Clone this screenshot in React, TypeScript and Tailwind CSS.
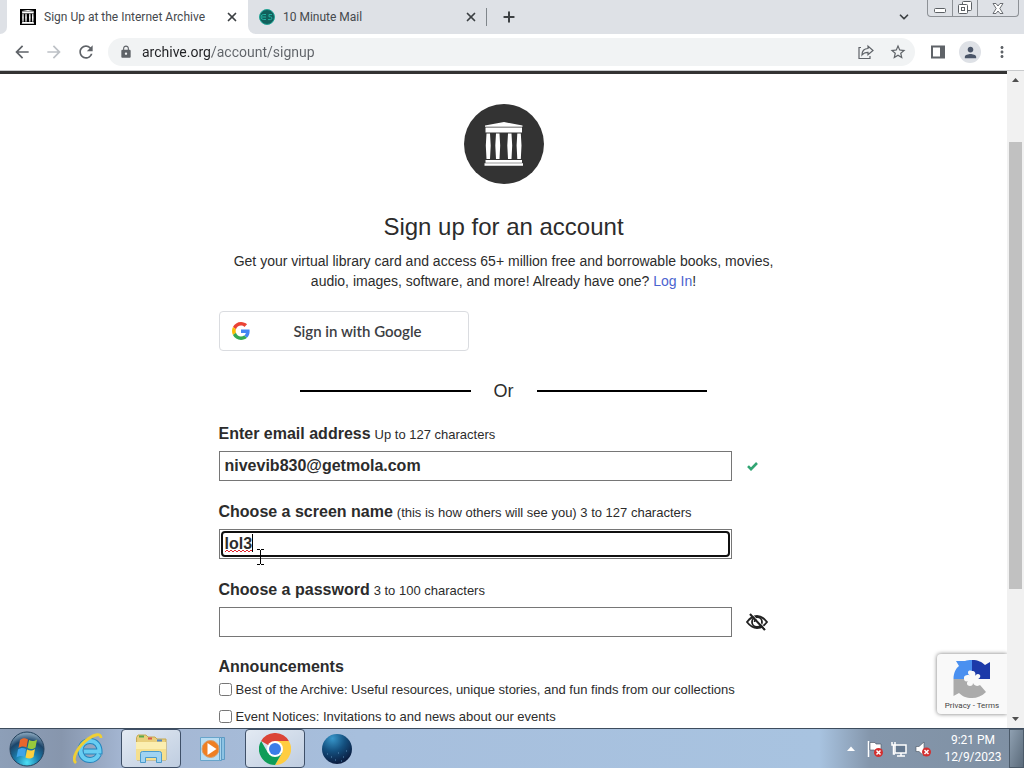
import React from "react";
import { ChevronDown, Plus, X } from "lucide-react";
import { MdArrowBack, MdArrowForward, MdLock, MdMoreVert, MdPerson, MdRefresh, MdStarBorder } from "react-icons/md";

const ArchiveLogo: React.FC<{ className?: string }> = ({ className }) => (
  <svg className={className} viewBox="0 0 40 44" fill="currentColor" aria-hidden="true">
    <path d="M20 0 38.500 3.500v1.200H1V3.500z" />
    <path d="M1.500 5.500h36.500v5H1.500z" />
    <path d="M2.500 11.500h3.500l.7 12-.7 13.500H2.500l-.7-13.500zM12 11.500h3.500l.7 12-.7 13.500H12l-.7-13.500zM24 11.500h3.500l.7 12-.7 13.500H24l-.7-13.500zM33.300 11.500h3.500l.7 12-.7 13.500h-3.500l-.7-13.500z" />
    <path d="M1.500 38h36.500v2.700H1.500zM.5 41.300h38.500v2.400H.5z" />
  </svg>
);

const GoogleIcon = () => (
  <svg className="size-[18px]" viewBox="0 0 48 48" aria-hidden="true">
    <path fill="#ea4335" d="M24 9.500c3.540 0 6.710 1.220 9.210 3.600l6.850-6.850C35.900 2.380 30.470 0 24 0 14.620 0 6.510 5.380 2.560 13.220l7.980 6.190C12.430 13.720 17.740 9.500 24 9.500z" />
    <path fill="#4285f4" d="M46.980 24.550c0-1.570-.15-3.090-.38-4.550H24v9.020h12.940c-.58 2.960-2.260 5.480-4.780 7.180l7.730 6c4.510-4.180 7.090-10.360 7.090-17.650z" />
    <path fill="#fbbc05" d="M10.530 28.590A14.500 14.500 0 0 1 9.770 24c0-1.600.27-3.140.76-4.590l-7.980-6.190A23.900 23.900 0 0 0 0 24c0 3.880.92 7.540 2.560 10.780z" />
    <path fill="#34a853" d="M24 48c6.480 0 11.930-2.130 15.890-5.810l-7.730-6c-2.150 1.450-4.920 2.300-8.160 2.300-6.260 0-11.570-4.220-13.470-9.910l-7.980 6.190C6.510 42.620 14.620 48 24 48z" />
  </svg>
);

const EyeSlash = () => (
  <svg className="h-[18px] w-[22px]" viewBox="0 0 22 18" fill="none" stroke="#222" aria-hidden="true">
    <path d="M1 9q4.500-6 10-6t10 6q-4.500 6-10 6T1 9z" strokeWidth="1.800" />
    <circle cx="11" cy="9" r="5" strokeWidth="1.800" />
    <path d="M8.500 9A2.500 2.500 0 0 1 11 6.500" strokeWidth="1.500" />
    <path d="m4 1 15 16" strokeWidth="2.200" />
    <path d="m5.500 .500 15 16" stroke="#fff" strokeWidth=".8" />
  </svg>
);

const TabStrip = () => (
  <header className="flex h-[34px] shrink-0 bg-white text-xs text-[#45494d]">
    <div className="w-[7px] rounded-br-lg bg-[#dee1e6]" />
    <div className="flex w-[241px] items-center bg-white pr-[9px] pl-[13px]">
      <span className="flex size-4 items-center justify-center bg-black text-white">
        <ArchiveLogo className="size-[14px]" />
      </span>
      <span className="ml-2 flex-1 whitespace-nowrap">Sign Up at the Internet Archive</span>
      <button aria-label="Close tab">
        <X className="size-[14px] text-[#3c4043]" strokeWidth={3} />
      </button>
    </div>
    <div className="flex flex-1 rounded-bl-lg bg-[#dee1e6]">
      <div className="flex w-[238px] items-center pr-2 pl-[11px]">
        <svg className="size-4" viewBox="0 0 16 16" aria-hidden="true">
          <circle cx="8" cy="8" r="7.500" fill="#12605c" stroke="#22a597" />
          <path d="M7 5.500H4.500A2.500 2.500 0 0 0 4.500 10.500H7M3 8h4M13 5.500h-3v2.300h1.500a1.400 1.400 0 0 1 0 2.800H9" fill="none" stroke="#23b3a2" />
        </svg>
        <span className="ml-2 flex-1">10 Minute Mail</span>
        <button aria-label="Close tab">
          <X className="size-[14px] text-[#3c4043]" strokeWidth={3} />
        </button>
      </div>
      <div className="my-2 w-px bg-[#80868b]" />
      <button aria-label="New tab" className="ml-[14px]">
        <Plus className="size-4 text-[#3c4043]" strokeWidth={3} />
      </button>
      <button aria-label="Search tabs" className="mr-4 ml-auto">
        <ChevronDown className="size-[14px] text-[#3c4043]" strokeWidth={3} />
      </button>
      <div className="mr-[5px] flex h-[17px] rounded-b border border-t-0 border-[#8d9196] text-[#5c6065]">
        <button aria-label="Minimize" className="flex w-6 items-center justify-center">
          <svg className="h-4 w-3" viewBox="0 0 12 16" fill="#fff" stroke="currentColor">
            <rect x=".5" y="8.500" width="11" height="4" rx="1" />
          </svg>
        </button>
        <button aria-label="Restore" className="flex w-[26px] items-center justify-center border-x border-[#8d9196]">
          <svg className="size-[14px]" viewBox="0 0 14 14" fill="#fff" stroke="currentColor">
            <rect x="4.500" y=".5" width="9" height="9" rx="1" />
            <rect x=".5" y="3.500" width="9" height="9" rx="1" />
            <rect x="3.500" y="6.500" width="3" height="3" />
          </svg>
        </button>
        <button aria-label="Close" className="flex w-10 items-center justify-center">
          <svg className="h-[11px] w-3" viewBox="0 0 12 11" fill="#fff" stroke="currentColor" strokeWidth=".9">
            <path d="M1 .500h3l2 2.500 2-2.500h3L7.800 5.500l3.200 5H8L6 8l-2 2.500H1l3.200-5z" />
          </svg>
        </button>
      </div>
    </div>
  </header>
);

const Toolbar = () => (
  <nav className="flex h-9 shrink-0 items-center bg-white pr-[13px] pl-3 text-[#5f6368]">
    <button aria-label="Back">
      <MdArrowBack className="size-5" />
    </button>
    <button aria-label="Forward" className="ml-3 text-[#bdc1c6]">
      <MdArrowForward className="size-5" />
    </button>
    <button aria-label="Reload" className="ml-3">
      <MdRefresh className="size-5" />
    </button>
    <div className="ml-3 flex h-7 flex-1 items-center rounded-full bg-[#f1f3f4] pr-2 pl-[11px]">
      <MdLock className="size-[14px]" />
      {/* host part is darker than the path */}
      <input
        aria-label="Address"
        defaultValue="archive.org/account/signup"
        className="ml-[9px] min-w-0 flex-1 bg-linear-to-r from-[#202124] from-[70px] to-[#5f6368] to-[70px] bg-clip-text text-sm text-transparent outline-none"
      />
      <button aria-label="Share">
        <svg className="size-4" viewBox="0 0 16 16" fill="none" stroke="currentColor" strokeWidth="1.200">
          <path d="M3 3.500H1v11h11V12" />
          <path d="M4 11c0-4 2-6.500 6-6.500V2l5 4.500-5 4.300V8.300C7.500 8.300 5.500 9 4 11z" />
        </svg>
      </button>
      <button aria-label="Bookmark" className="ml-[15px]">
        <MdStarBorder className="size-[18px]" />
      </button>
    </div>
    <button aria-label="Side panel" className="ml-4">
      <svg className="size-[14px]" viewBox="0 0 14 14" fill="none" stroke="currentColor" strokeWidth="2">
        <path d="M1 1.500h12v11H1z" />
        <path d="M11 1v12" strokeWidth="4" />
      </svg>
    </button>
    <button aria-label="Profile" className="ml-[14px] flex size-[22px] items-center justify-center rounded-full bg-[#dee1e6]">
      <MdPerson className="size-[17px] text-[#4a5568]" />
    </button>
    <button aria-label="Menu" className="ml-3">
      <MdMoreVert className="size-[18px]" />
    </button>
  </nav>
);

interface FieldLabelProps {
  htmlFor: string;
  title: string;
  hint: string;
}

const FieldLabel: React.FC<FieldLabelProps> = ({ htmlFor, title, hint }) => (
  <label htmlFor={htmlFor} className="mb-[7px] flex h-5 items-baseline gap-1 text-[13px] leading-5">
    <span className="text-base leading-5 font-bold">{title}</span>
    <span>{hint}</span>
  </label>
);

const SignupForm = () => (
  <form className="mx-auto w-full max-w-[570px]">
    <div className="mx-auto mb-7 flex size-20 items-center justify-center rounded-full bg-[#333] text-white">
      <ArchiveLogo className="h-11 w-10" />
    </div>
    <h1 className="mb-[9px] text-center text-2xl leading-[30px]">Sign up for an account</h1>
    <p className="mb-5 px-3 text-center text-sm leading-5">
      Get your virtual library card and access 65+ million free and borrowable books, movies, audio, images, software,
      and more! Already have one?{" "}
      <a href="#login" className="text-[#4b64cf]">
        Log In
      </a>
      !
    </p>
    <button
      type="button"
      className="flex h-10 w-[250px] items-center rounded border border-[#dadce0] pr-[2px] pl-3 font-['Lato',sans-serif] text-[15px] font-semibold text-[#3c4043]"
    >
      <GoogleIcon />
      <span className="flex-1 text-center">Sign in with Google</span>
    </button>
    <div className="mx-auto mt-[30px] mb-[23px] flex w-[407px] items-center gap-[23px] text-lg leading-5">
      <span className="h-0.5 flex-1 bg-black" />
      Or
      <span className="h-0.5 flex-1 bg-black" />
    </div>

    <FieldLabel htmlFor="email" title="Enter email address" hint="Up to 127 characters" />
    <div className="mb-[21px] flex items-center">
      <input
        id="email"
        type="email"
        defaultValue="nivevib830@getmola.com"
        className="h-[30px] w-[513px] border border-[#767676] px-[5px] text-base font-bold outline-none"
      />
      <svg className="ml-[15px] h-[9px] w-[11px]" viewBox="0 0 11 9" fill="none" stroke="#31a573" strokeWidth="2.600" aria-hidden="true">
        <path d="M1 4.200 4 7.200 10 1" />
      </svg>
    </div>

    <FieldLabel
      htmlFor="screenname"
      title="Choose a screen name"
      hint="(this is how others will see you) 3 to 127 characters"
    />
    <div className="relative mb-[21px] h-[30px] w-[513px] border border-[#767676] p-px">
      <input
        id="screenname"
        defaultValue="lol3"
        spellCheck={false}
        className="block h-[26px] w-full rounded border-2 border-[#101010] px-[2px] text-base font-bold outline-none"
      />
      {/* spelling underline and caret */}
      <svg className="absolute top-[19px] left-[5px]" width="28" height="4" viewBox="0 0 28 4" fill="none" stroke="#e0242e">
        <path d="m0 3 2-2 2 2 2-2 2 2 2-2 2 2 2-2 2 2 2-2 2 2 2-2 2 2 2-2 2 2" />
      </svg>
      <span className="absolute top-1 left-8 h-[18px] w-px bg-black" />
      {/* mouse pointer */}
      <svg className="absolute top-[19px] left-[37px]" width="7" height="16" viewBox="0 0 7 16" fill="none" stroke="#000">
        <path d="M0 .5h3M4 .5h3M3.500 1v14M0 15.500h3M4 15.500h3" />
      </svg>
    </div>

    <FieldLabel htmlFor="password" title="Choose a password" hint="3 to 100 characters" />
    <div className="mb-[21px] flex items-center">
      <input
        id="password"
        type="password"
        className="h-[30px] w-[513px] border border-[#767676] px-[5px] text-base font-bold outline-none"
      />
      <button type="button" aria-label="Show password" className="ml-[14px]">
        <EyeSlash />
      </button>
    </div>

    <fieldset>
      <legend className="text-base leading-[18px] font-bold">Announcements</legend>
      {[
        "Best of the Archive: Useful resources, unique stories, and fun finds from our collections",
        "Event Notices: Invitations to and news about our events",
      ].map((text) => (
        <label key={text} className="flex h-[27px] items-center gap-1 text-[13px]">
          <input type="checkbox" className="size-[13px]" />
          {text}
        </label>
      ))}
    </fieldset>
  </form>
);

const RecaptchaBadge = () => (
  <aside className="absolute right-0 bottom-[14px] flex h-[60px] w-[70px] flex-col items-center rounded-l-sm bg-[#f9f9f9] pt-[5px] font-['Roboto',sans-serif] text-[8px] text-[#444] shadow-[0_0_4px_#777]">
    <svg className="size-10" viewBox="0 0 40 40" aria-hidden="true">
      <path fill="#4a90f0" d="M20 1v11c-2-1-4-.5-4 1.500s1 2.500 2 3c-3-1-6 0-6 2v1.500H1.500C1.500 14 4 9 7 7L4 2h9c2-.7 4-1 7-1z" />
      <path fill="#1c3aa9" d="M20 1c6 0 10 2 13 5l5-3v17H26c3-1 3-5 0-5-2 0-2 1-3 2 1-3 0-5-3-5z" />
      <path fill="#ababab" d="M1.500 20H12c0 2 2 3 4 2-2 2-1 5 2 5 2 0 3-1 3-3 2 4 6 3 7 2l6 7c-4 4-9 6-14 6-6 0-10-2-13-5l-5.500 3z" />
    </svg>
    <p className="mt-[2px] leading-[10px] whitespace-nowrap">
      <a href="#privacy">Privacy</a> - <a href="#terms">Terms</a>
    </p>
  </aside>
);

const Scrollbar = () => (
  <div className="flex w-[17px] shrink-0 flex-col bg-[#f1f1f1]" aria-hidden="true">
    <svg className="size-[17px]" viewBox="0 0 17 17" fill="#505050">
      <path d="m5 11 3.500-4 3.500 4z" />
    </svg>
    <div className="flex-[54]" />
    <div className="mx-[2px] flex-[447] bg-[#c1c1c1]" />
    <div className="flex-[122]" />
    <svg className="size-[17px]" viewBox="0 0 17 17" fill="#505050">
      <path d="m5 6 3.500 4L12 6z" />
    </svg>
  </div>
);

const StartOrb = () => (
  <svg className="size-9" viewBox="0 0 36 36" aria-hidden="true">
    <defs>
      <radialGradient id="orb" cx=".5" cy=".9" r=".85">
        <stop offset="0" stopColor="#4de0f5" />
        <stop offset=".4" stopColor="#1b7fae" />
        <stop offset=".75" stopColor="#1c456a" />
        <stop offset="1" stopColor="#7f9db5" />
      </radialGradient>
    </defs>
    <circle cx="18" cy="18" r="17" fill="url(#orb)" stroke="#24425d" />
    <path fill="#e8672c" d="M11 9c3-2.500 5-2 8-.5l-1.500 8c-3-1.500-5-1.500-8 .5z" />
    <path fill="#98c93c" d="M20 9c3 1.500 5 1.500 8-.5l-1.500 8c-3 2-5 2-8 .5z" />
    <path fill="#3fa4e8" d="M9 18.500c3-2 5-2 8-.5l-1.500 8c-3-1.500-5-1.500-8 .5z" />
    <path fill="#fcd03e" d="M18 18.500c3 1.500 5 1.500 8-.5l-1.500 8c-3 2-5 2-8 .5z" />
  </svg>
);

const ExplorerIe = () => (
  <svg className="h-8 w-8" viewBox="0 0 32 32" fill="none" aria-hidden="true">
    <path d="M26 21c-2 4-5 6-9 6-5.500 0-9.500-4-9.500-9.500S11.500 8 17 8s9.500 4 9.500 10.500H11" stroke="#2384bd" strokeWidth="6" />
    <path d="M26 21c-2 4-5 6-9 6-5.500 0-9.500-4-9.500-9.500S11.500 8 17 8s9.500 4 9.500 10.500H11" stroke="#68cdf2" strokeWidth="4" />
    <path d="M3 30C-2 26 5 13 15 6c7-5 13-6 13-1" stroke="#efcf35" strokeWidth="2.800" />
  </svg>
);

const FolderIcon = () => (
  <svg className="h-[30px] w-[34px]" viewBox="0 0 34 30" aria-hidden="true">
    <path fill="#e9cf7c" stroke="#c6a850" d="M2.500 3.500 4 1h8l2 2h7l2 2h9v21h-29z" />
    <path fill="#5aa84b" d="M5 1.500h5v2H5z" />
    <path fill="#d9574a" d="M14 3.500h4v2h-4z" />
    <path fill="#4f86c6" d="M23 5.500h5v2h-5z" />
    <path fill="#fbeeb0" d="M2 8h30v18H2z" />
    <path fill="#f5df8e" d="M2 15h30v11H2z" />
    <path fill="#9fd3f2" stroke="#4a9bcc" d="M6.500 28.500v-9q0-2 2-2h17q2 0 2 2v9h-5v-5h-11v5z" />
  </svg>
);

const MediaIcon = () => (
  <svg className="h-[26px] w-[26px]" viewBox="0 0 26 26" aria-hidden="true">
    <path fill="#8dc3e3" stroke="#5d9bc4" d="M6.500 1.500h18v22h-18z" />
    <path fill="#a9d5ee" stroke="#5d9bc4" d="M3.500 1.500h18v23h-18z" />
    <path fill="#b9ddf2" stroke="#68a5cb" d="M.5 1.500h19v23H.5z" />
    <circle cx="10.500" cy="13" r="8.500" fill="#ef7f22" stroke="#d4a071" />
    <path fill="#fff" d="m7.500 7 9 6-9 6z" />
  </svg>
);

const ChromeIcon = () => (
  <svg className="size-8" viewBox="0 0 48 48" aria-hidden="true">
    <path fill="#db4437" d="M24 24 3.200 12A24 24 0 0 1 44.800 12z" />
    <path fill="#ffcd40" d="M24 12h20.800A24 24 0 0 1 24 48l10.400-18z" />
    <path fill="#0f9d58" d="M3.200 12A24 24 0 0 0 24 48l10.400-18H13.600z" />
    <circle cx="24" cy="24" r="12" fill="#fff" />
    <circle cx="24" cy="24" r="9" fill="#3b7de8" />
  </svg>
);

const GlobeIcon = () => (
  <svg className="size-8" viewBox="0 0 32 32" aria-hidden="true">
    <defs>
      <radialGradient id="globe" cx=".35" cy=".15" r=".85">
        <stop offset="0" stopColor="#3796ca" />
        <stop offset=".5" stopColor="#14507f" />
        <stop offset="1" stopColor="#0a1c3f" />
      </radialGradient>
    </defs>
    <circle cx="16" cy="16" r="15" fill="url(#globe)" />
    <path d="M6 21h1M10 24h1M17 20h1M22 24h1M25 18h1M14 27h1M20 28h1" stroke="#5b8eb8" />
  </svg>
);

const taskButtons = [
  { name: "Internet Explorer", icon: <ExplorerIe />, open: false },
  { name: "Windows Explorer", icon: <FolderIcon />, open: true },
  { name: "Media Player", icon: <MediaIcon />, open: false },
  { name: "Chrome", icon: <ChromeIcon />, open: true },
  { name: "Globe", icon: <GlobeIcon />, open: false },
];

const Taskbar = () => (
  <footer className="flex h-10 shrink-0 items-stretch border-t border-[#3d4c5d] bg-[linear-gradient(90deg,#8d9fb8_0%,#8796ad_6%,#a4b6d2_12%,#a7bfdd_35%,#a8c3e0_80%,#8496ab_85%,#7f90a3_100%)]">
    <button aria-label="Start" className="mr-[5px] flex w-[54px] items-center justify-center">
      <StartOrb />
    </button>
    <div className="flex gap-0.5">
      {taskButtons.map((task) => (
        <button
          key={task.name}
          aria-label={task.name}
          className={`flex w-[60px] items-center justify-center ${
            task.open ? "rounded border border-[#3f5068] bg-linear-to-br from-[#e3eaf3] to-[#bfcde0]" : ""
          }`}
        >
          {task.icon}
        </button>
      ))}
    </div>
    <div className="ml-auto flex items-center text-white">
      <button aria-label="Show hidden icons" className="mr-3">
        <svg className="h-[5px] w-2" viewBox="0 0 8 5" fill="#fff">
          <path d="m0 5 4-4.500L8 5z" />
        </svg>
      </button>
      <div className="flex gap-2">
        <svg className="size-4" viewBox="0 0 16 16" aria-hidden="true">
          <path d="M1.500 0v16" stroke="#fff" strokeWidth="1.500" />
          <path fill="#fff" stroke="#46515e" strokeWidth=".6" d="M3 1.500h5l1 1.500h5v7H8L7 9H3z" />
          <circle cx="11.500" cy="11.500" r="4.500" fill="#d32f2f" />
          <path d="m9.500 9.500 4 4m0-4-4 4" stroke="#fff" strokeWidth="1.500" />
        </svg>
        <svg className="size-4" viewBox="0 0 16 16" fill="none" stroke="#fff" aria-hidden="true">
          <path fill="#64788f" strokeWidth="1.500" d="M4 4h11v8H4z" />
          <path strokeWidth="1.500" d="M6 15h8M10 12v3M1 1v3h3V1M2.500 4v9H4" />
        </svg>
        <svg className="size-4" viewBox="0 0 16 16" aria-hidden="true">
          <path fill="#fff" stroke="#46515e" strokeWidth=".6" d="M1 5.500h3L9 1v14l-5-4.500H1z" />
          <circle cx="11.500" cy="11" r="4.500" fill="#d32f2f" />
          <path d="m9.500 9 4 4m0-4-4 4" stroke="#fff" strokeWidth="1.500" />
        </svg>
      </div>
      <div className="ml-[6px] w-[72px] text-center text-xs leading-[17px]">
        <div>9:21 PM</div>
        <div>12/9/2023</div>
      </div>
      <button aria-label="Show desktop" className="h-full w-[15px] border border-[#4b5a69] bg-linear-to-br from-[#8fa0b1] to-[#5b6b7b]" />
    </div>
  </footer>
);

export default function App() {
  return (
    <div className="flex h-screen flex-col overflow-hidden bg-white font-['Roboto',sans-serif]">
      <TabStrip />
      <Toolbar />
      <div className="flex min-h-0 flex-1 border-t border-[#c8cacc]">
        <main className="relative flex-1 overflow-hidden border-t-[3px] border-[#333] pt-[30px] font-['Liberation_Sans',sans-serif] text-[#2c2c2c]">
          <SignupForm />
          <RecaptchaBadge />
        </main>
        <Scrollbar />
      </div>
      <Taskbar />
    </div>
  );
}
